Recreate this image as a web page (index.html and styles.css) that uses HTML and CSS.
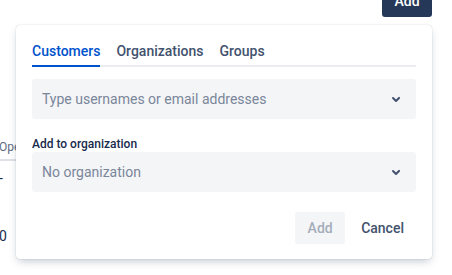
FILE: index.html
```html
<!DOCTYPE html>
<html lang="en">
<head>
    <meta charset="UTF-8">
    <title>Add customers</title>
    <link rel="stylesheet" href="styles.css">
</head>
<body>
    <div class="page">
        <div class="page-header">
            <button class="btn-primary">Add</button>
        </div>

        <div class="table">
            <div class="table-head">Open</div>
            <div class="table-cell">-</div>
            <div class="table-cell">0</div>
        </div>

        <div class="popup">
            <div class="tabs">
                <span class="tab active">Customers</span>
                <span class="tab">Organizations</span>
                <span class="tab">Groups</span>
            </div>

            <div class="select">
                <span class="placeholder">Type usernames or email addresses</span>
                <svg class="chevron" width="24" height="24" viewBox="0 0 24 24"><path d="M8.3 10.3a1 1 0 0 1 1.4 0L12 12.6l2.3-2.3a1 1 0 1 1 1.4 1.4l-3 3a1 1 0 0 1-1.4 0l-3-3a1 1 0 0 1 0-1.4z" fill="currentColor"/></svg>
            </div>

            <label class="field-label">Add to organization</label>
            <div class="select">
                <span class="placeholder">No organization</span>
                <svg class="chevron" width="24" height="24" viewBox="0 0 24 24"><path d="M8.3 10.3a1 1 0 0 1 1.4 0L12 12.6l2.3-2.3a1 1 0 1 1 1.4 1.4l-3 3a1 1 0 0 1-1.4 0l-3-3a1 1 0 0 1 0-1.4z" fill="currentColor"/></svg>
            </div>

            <div class="actions">
                <button class="btn btn-disabled" disabled>Add</button>
                <button class="btn btn-subtle">Cancel</button>
            </div>
        </div>
    </div>
</body>
</html>
```

FILE: styles.css
```css
body {
    margin: 0;
    font-family: Roboto, "Liberation Sans", sans-serif;
    font-size: 14px;
    color: #172b4d;
    background: #fff;
    overflow: hidden;
}

.page {
    position: relative;
    display: flow-root;
    height: 275px;
}

.page-header {
    display: flex;
    justify-content: flex-end;
    padding-right: 20px;
    margin-top: -15px;
}

.btn-primary {
    background: #253858;
    color: #fff;
    border: none;
    border-radius: 3px;
    height: 32px;
    width: 50px;
    font-family: inherit;
    font-size: 14px;
    font-weight: 500;
    padding: 0;
}

.table {
    margin-top: 122px;
    width: 60px;
    margin-left: -1px;
}

.table-head {
    font-size: 12px;
    line-height: 16px;
    color: #5e6c84;
    padding-bottom: 4px;
    border-bottom: 2px solid #dfe1e6;
}

.table-cell {
    box-sizing: border-box;
    height: 58px;
    padding-top: 8px;
    line-height: 18px;
    color: #172b4d;
}

.popup {
    position: absolute;
    left: 16px;
    top: 25px;
    width: 384px;
    height: 202px;
    padding: 16px;
    background: #fff;
    border-radius: 4px;
    box-shadow: 0 4px 8px -2px rgba(9, 30, 66, 0.25), 0 0 1px rgba(9, 30, 66, 0.31);
}

.tabs {
    display: flex;
    gap: 16px;
    border-bottom: 2px solid #ebecf0;
}

.tab {
    font-weight: 500;
    color: #42526e;
    padding: 0 0 4px;
    line-height: 20px;
    margin-bottom: -2px;
    border-bottom: 2px solid transparent;
}

.tab.active {
    color: #0052cc;
    border-bottom-color: #0052cc;
}

.select {
    display: flex;
    align-items: center;
    justify-content: space-between;
    height: 40px;
    background: #f4f5f7;
    border-radius: 3px;
    padding: 0 8px 0 10px;
    margin-top: 12px;
}

.placeholder {
    color: #7a869a;
}

.chevron {
    color: #42526e;
}

.field-label {
    display: block;
    font-size: 12px;
    font-weight: 500;
    color: #172b4d;
    margin-top: 18px;
    margin-bottom: -11px;
}

.actions {
    display: flex;
    justify-content: flex-end;
    gap: 4px;
    margin-top: 20px;
}

.btn {
    height: 32px;
    border: none;
    border-radius: 3px;
    font-family: inherit;
    font-size: 14px;
    font-weight: 500;
    padding: 0 12px;
    background: none;
}

.btn-disabled {
    width: 50px;
    background: #f4f5f7;
    color: #a5adba;
}

.btn-subtle {
    color: #42526e;
}
```
